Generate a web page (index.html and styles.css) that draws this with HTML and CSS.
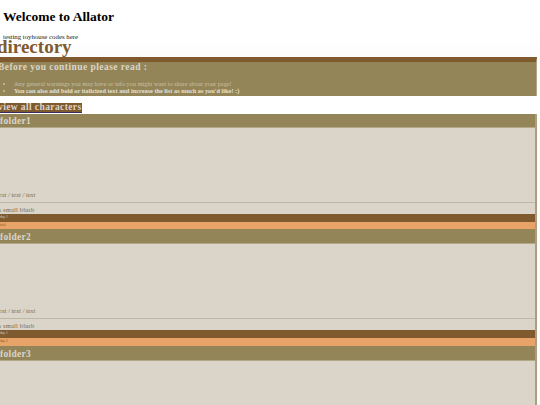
FILE: index.html
```html
<!DOCTYPE html>
<html lang="en">
<head>
    <meta charset="UTF-8">
    <meta name="viewport" content="width=device-width, initial-scale=1.0">
    <title>Welcome to Allator</title>
    <link rel="stylesheet" href="styles.css">
</head>
<body>
    <h1 class="welcome">Welcome to Allator</h1>
    <div class="page">
        <p class="note">testing toyhouse codes here</p>
        <h2 class="title">directory</h2>
        <div class="notice">
            <h3 class="notice-head">Before you continue please read :</h3>
            <ul class="notice-list">
                <li>Any general warnings you may have or info you might want to share about your page!</li>
                <li><b>You can also add bold or italicized text and increase the list as much as you'd like! :)</b></li>
            </ul>
        </div>
        <div class="all"><a class="all-link" href="#">view all characters</a></div>
        <div class="folders">
            <section class="folder">
                <h3 class="folder-head">folder1</h3>
                <div class="art"><i>text / text / text</i></div>
                <p class="blurb">a small blurb</p>
                <div class="tag tag-dark">day 1</div>
                <div class="tag tag-light">trial</div>
            </section>
            <section class="folder">
                <h3 class="folder-head">folder2</h3>
                <div class="art"><i>text / text / text</i></div>
                <p class="blurb">a small blurb</p>
                <div class="tag tag-dark">day 1</div>
                <div class="tag tag-light">day 2</div>
            </section>
            <section class="folder">
                <h3 class="folder-head">folder3</h3>
                <div class="art"></div>
            </section>
        </div>
    </div>
</body>
</html>
```
FILE: styles.css
```css
html, body { margin: 0; padding: 0; height: 405px; overflow: hidden; background-color: #fff }
body { font-family: "Liberation Serif", "Times New Roman", serif }
.welcome { margin: 0; padding: 8px 0 0 3px; height: 25px; font-size: 13.5px; line-height: 17px; color: #000 }
.page { background: linear-gradient(#fff, #fcfcfc 24px) }
.note { margin: 0; padding: 0 0 0 3px; height: 7px; font-size: 6.8px; line-height: 8px; color: #222 }
.title { margin: 0 0 0 -3px; height: 17px; font-size: 19px; line-height: 13px; color: #7f5a2f }
.notice { background-color: #948558; border-top: 5px solid #7f5a2f; border-right: 1px solid #b0a888; margin-right: 3px; height: 34px; color: #c9c0a4 }
.notice-head { margin: 0 0 0 -2px; font-size: 9.5px; line-height: 11px; letter-spacing: .45px; color: #dbd4c8 }
.notice-list { margin: 7px 0 0; padding: 0 0 0 14px; font-size: 6.3px; line-height: 7px }
.notice-list b { color: #e6e0d2 }
.all { display: flex; align-items: flex-start; background-color: #fff; height: 18px; padding-top: 7px; box-sizing: border-box }
.all-link { margin-left: -2px; font-size: 9.5px; line-height: 9px; font-weight: bold; letter-spacing: .4px; color: #dbd4c8; background-color: #7f5a2f; border-bottom: 1px solid #3c2a5c; text-decoration: none }
.folders { border-right: 2px solid #a89f80; margin-right: 3px; background-color: #dbd4c8 }
.folder-head { margin: 0; height: 14px; background-color: #948558; border-bottom: 1px solid #b0a888; font-size: 9.5px; line-height: 17px; letter-spacing: .3px; color: #dbd4c8 }
.folder:first-child .folder-head { height: 13px; line-height: 15px }
.art { height: 75px; border-bottom: 1px solid #bdb7a8; display: flex; align-items: flex-end; margin-left: -3px; font-size: 6.5px; line-height: 8px; padding-bottom: 3px; box-sizing: border-box; color: #7f6a45 }
.blurb { margin: 0 0 0 -2px; height: 8px; padding-top: 3px; font-size: 6.5px; line-height: 8px; letter-spacing: .2px; color: #7f6a45 }
.tag { height: 7.7px; font-size: 3.5px; line-height: 7.7px }
.tag-dark { background-color: #7f5a2f; color: #dbd4c8 }
.tag-light { background-color: #e8a368; color: #7f5a2f }
```
